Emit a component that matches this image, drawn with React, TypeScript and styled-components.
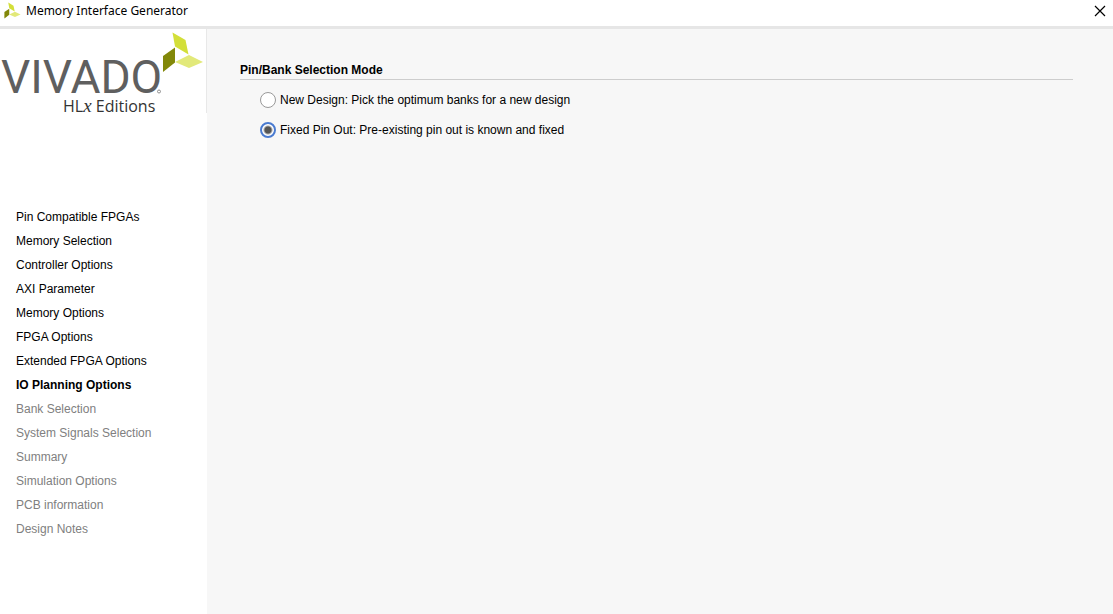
import { useState } from "react";
import styled, { createGlobalStyle } from "styled-components";

const GlobalStyle = createGlobalStyle`
  * { box-sizing: border-box; }
  body {
    margin: 0;
    background: #f7f7f7;
    color: #000;
    font: 12px/16px "Liberation Sans", Arial, sans-serif;
  }
`;

const Window = styled.div`
  min-height: 100vh;
  display: flex;
  flex-direction: column;
`;

const TitleBar = styled.header`
  display: flex;
  align-items: center;
  gap: 5px;
  height: 29px;
  padding: 0 7px 5px 4px;
  background: #fff;
  border-bottom: 3px solid #e6e6e6;
`;

const Title = styled.h1`
  flex: 1;
  margin: 0;
  font: 400 12px/20px "Noto Sans", "Open Sans", sans-serif;
`;

const CloseButton = styled.button`
  display: flex;
  padding: 0;
  border: 0;
  background: none;
`;

const Body = styled.div`
  flex: 1;
  display: grid;
  grid-template-columns: 207px 1fr;
`;

const Sidebar = styled.aside`
  background: #fff;
`;

const Brand = styled.div`
  height: 84px;
  border-right: 1px solid #e8e8e8;
`;

const BrandArt = styled.svg`
  display: block;
  overflow: visible;
`;

const Steps = styled.ol`
  list-style: none;
  margin: 92px 0 0;
  padding: 0 16px;
`;

const Step = styled.li<{ $state: StepState }>`
  line-height: 24px;
  white-space: nowrap;
  font-weight: ${(p) => (p.$state === "current" ? 700 : 400)};
  color: ${(p) => (p.$state === "pending" ? "#808080" : "#000")};
`;

const Main = styled.main`
  padding: 33px 40px 32px 33px;
`;

const Group = styled.fieldset`
  min-width: 0;
  margin: 0;
  padding: 0;
  border: 0;
`;

const GroupTitle = styled.legend`
  width: 100%;
  padding: 0 0 1px;
  border-bottom: 1px solid #cdcdcd;
  font-weight: 700;
`;

const Choices = styled.div`
  display: flex;
  flex-direction: column;
  align-items: flex-start;
  gap: 14px;
  padding: 12px 0 0 20px;
`;

const Choice = styled.label`
  display: flex;
  align-items: center;
  gap: 4px;
`;

const Radio = styled.input`
  appearance: none;
  width: 16px;
  height: 16px;
  margin: 0;
  border: 1px solid #999;
  border-radius: 50%;
  background: #fff;

  &:checked {
    border: 2px solid #4a7bd0;
    background: radial-gradient(circle, #555 3px, #fff 5px);
  }
`;

type StepState = "done" | "current" | "pending";

const steps: { name: string; state: StepState }[] = [
  { name: "Pin Compatible FPGAs", state: "done" },
  { name: "Memory Selection", state: "done" },
  { name: "Controller Options", state: "done" },
  { name: "AXI Parameter", state: "done" },
  { name: "Memory Options", state: "done" },
  { name: "FPGA Options", state: "done" },
  { name: "Extended FPGA Options", state: "done" },
  { name: "IO Planning Options", state: "current" },
  { name: "Bank Selection", state: "pending" },
  { name: "System Signals Selection", state: "pending" },
  { name: "Summary", state: "pending" },
  { name: "Simulation Options", state: "pending" },
  { name: "PCB information", state: "pending" },
  { name: "Design Notes", state: "pending" },
];

const modes = [
  { id: "new", label: "New Design: Pick the optimum banks for a new design" },
  { id: "fixed", label: "Fixed Pin Out: Pre-existing pin out is known and fixed" },
];

function Leaves() {
  return (
    <>
      <path d="M172.500 3.500 L185.500 11 L188.500 25.500 L175 17.500 Z" fill="#d3df39" />
      <path d="M163 27 L175 18.500 V33.500 L163 43 Z" fill="#828809" />
      <path d="M175 33 L189 26 L203 33 L189 39 Z" fill="#e2e97a" />
    </>
  );
}

export default function App() {
  const [mode, setMode] = useState("fixed");

  return (
    <Window>
      <GlobalStyle />
      <TitleBar>
        <svg width="17" height="17" viewBox="162 2 42 42" aria-hidden="true">
          <Leaves />
        </svg>
        <Title>Memory Interface Generator</Title>
        <CloseButton type="button" aria-label="Close">
          <svg width="12" height="12" viewBox="0 0 12 12" aria-hidden="true">
            <path d="M1 1 L11 11 M11 1 L1 11" stroke="#000" strokeWidth="1.200" />
          </svg>
        </CloseButton>
      </TitleBar>
      <Body>
        <Sidebar>
          <Brand>
            <BrandArt width="206" height="84" viewBox="0 0 206 84" role="img" aria-label="Vivado HLx Editions">
              <text x="1" y="64" fontFamily="Roboto, sans-serif" fontWeight="400" fontSize="46" fill="#5f5f5f">VIVADO</text>
              <circle cx="159" cy="62.500" r="1.500" fill="none" stroke="#777" strokeWidth="0.800" />
              <text x="63" y="83" fontFamily="Open Sans, sans-serif" fontSize="16" fill="#333">
                HL<tspan fontFamily="Liberation Serif, serif" fontStyle="italic" fontSize="19">x</tspan> Editions
              </text>
              <Leaves />
            </BrandArt>
          </Brand>
          <Steps>
            {steps.map((s) => (
              <Step key={s.name} $state={s.state} aria-current={s.state === "current" ? "step" : undefined}>
                {s.name}
              </Step>
            ))}
          </Steps>
        </Sidebar>
        <Main>
          <Group>
            <GroupTitle>Pin/Bank Selection Mode</GroupTitle>
            <Choices>
              {modes.map((m) => (
                <Choice key={m.id}>
                  <Radio type="radio" name="mode" checked={mode === m.id} onChange={() => setMode(m.id)} />
                  {m.label}
                </Choice>
              ))}
            </Choices>
          </Group>
        </Main>
      </Body>
    </Window>
  );
}
